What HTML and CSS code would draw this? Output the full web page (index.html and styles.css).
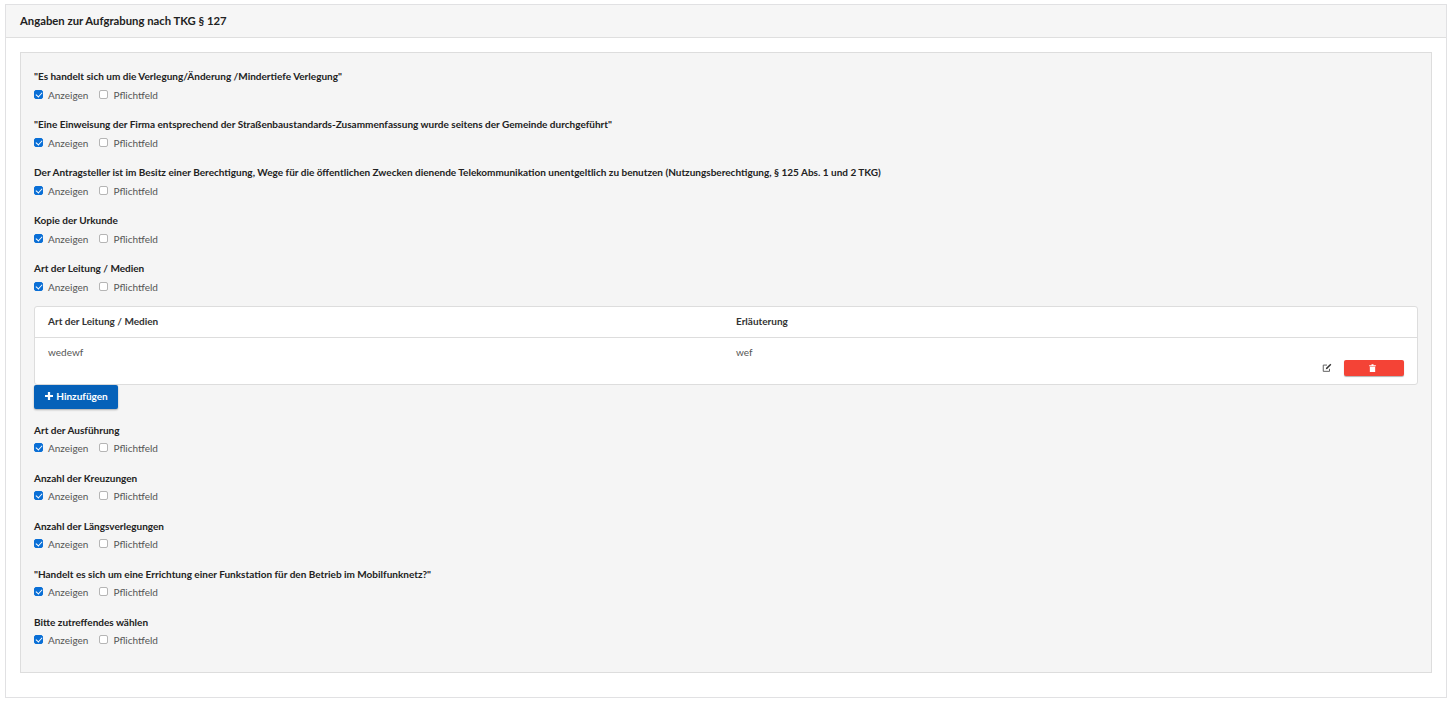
FILE: index.html
```html
<!DOCTYPE html>
<html lang="de">
<head>
<meta charset="utf-8">
<title>Angaben zur Aufgrabung</title>
<link rel="stylesheet" href="styles.css">
</head>
<body>
<section class="card">
  <header class="card-head">Angaben zur Aufgrabung nach TKG § 127</header>
  <div class="card-body">
    <div class="well">
      <div class="field"><div class="field-label">"Es handelt sich um die Verlegung/Änderung /Mindertiefe Verlegung"</div><div class="checks"><label class="check"><input type="checkbox" checked>Anzeigen</label><label class="check"><input type="checkbox">Pflichtfeld</label></div></div>
      <div class="field"><div class="field-label">"Eine Einweisung der Firma entsprechend der Straßenbaustandards-Zusammenfassung wurde seitens der Gemeinde durchgeführt"</div><div class="checks"><label class="check"><input type="checkbox" checked>Anzeigen</label><label class="check"><input type="checkbox">Pflichtfeld</label></div></div>
      <div class="field"><div class="field-label">Der Antragsteller ist im Besitz einer Berechtigung, Wege für die öffentlichen Zwecken dienende Telekommunikation unentgeltlich zu benutzen (Nutzungsberechtigung, § 125 Abs. 1 und 2 TKG)</div><div class="checks"><label class="check"><input type="checkbox" checked>Anzeigen</label><label class="check"><input type="checkbox">Pflichtfeld</label></div></div>
      <div class="field"><div class="field-label">Kopie der Urkunde</div><div class="checks"><label class="check"><input type="checkbox" checked>Anzeigen</label><label class="check"><input type="checkbox">Pflichtfeld</label></div></div>
      <div class="field"><div class="field-label">Art der Leitung / Medien</div><div class="checks"><label class="check"><input type="checkbox" checked>Anzeigen</label><label class="check"><input type="checkbox">Pflichtfeld</label></div></div>
      <div class="table-box">
        <div class="row row-head"><div class="col">Art der Leitung / Medien</div><div class="col">Erläuterung</div></div>
        <div class="row row-data">
          <div class="col">wedewf</div><div class="col">wef</div>
          <div class="actions">
            <svg class="edit-icon" viewBox="0 0 12 12" width="10" height="10" aria-hidden="true"><path d="M9 7v3H1.5V2.5H6" fill="none" stroke="#555" stroke-width="1.1"/><path d="M4.5 7.6 5 5.8 10 1l1.2 1.2-5 4.9z" fill="#333"/></svg>
            <button class="btn-delete" type="button" aria-label="Löschen"><svg viewBox="0 0 10 12" width="7" height="8" aria-hidden="true"><path d="M0 2h10v1.2H0zM3.5 .3h3V2h-3zM1 4h8v8H1z" fill="#fff"/></svg></button>
          </div>
        </div>
      </div>
      <button class="btn-add" type="button"><svg viewBox="0 0 10 10" width="8" height="8" aria-hidden="true"><path d="M3.6 0h2.8v3.6H10v2.8H6.4V10H3.6V6.4H0V3.6h3.6z" fill="#fff"/></svg>Hinzufügen</button>
      <div class="field-group">
      <div class="field"><div class="field-label">Art der Ausführung</div><div class="checks"><label class="check"><input type="checkbox" checked>Anzeigen</label><label class="check"><input type="checkbox">Pflichtfeld</label></div></div>
      <div class="field"><div class="field-label">Anzahl der Kreuzungen</div><div class="checks"><label class="check"><input type="checkbox" checked>Anzeigen</label><label class="check"><input type="checkbox">Pflichtfeld</label></div></div>
      <div class="field"><div class="field-label">Anzahl der Längsverlegungen</div><div class="checks"><label class="check"><input type="checkbox" checked>Anzeigen</label><label class="check"><input type="checkbox">Pflichtfeld</label></div></div>
      <div class="field"><div class="field-label">"Handelt es sich um eine Errichtung einer Funkstation für den Betrieb im Mobilfunknetz?"</div><div class="checks"><label class="check"><input type="checkbox" checked>Anzeigen</label><label class="check"><input type="checkbox">Pflichtfeld</label></div></div>
      <div class="field"><div class="field-label">Bitte zutreffendes wählen</div><div class="checks"><label class="check"><input type="checkbox" checked>Anzeigen</label><label class="check"><input type="checkbox">Pflichtfeld</label></div></div>
      </div>
    </div>
  </div>
</section>
</body>
</html>
```
FILE: styles.css
```css
* { box-sizing: border-box; }
html, body { margin: 0; background: #fff; }
body { padding: 4px 6px 0 5px; font-family: Lato, "Noto Sans", sans-serif; font-size: 10px; color: #333; }
.card { border: 1px solid #e1e1e3; height: 694px; }
.card-head { height: 33px; padding: 0 14px 2px; background: #f6f6f6; border-bottom: 1px solid #dfdfdf; display: flex; align-items: center; font-size: 11.3px; font-weight: 700; color: #222; }
.card-body { padding: 14px 14px 0; }
.well { background: #f5f5f5; border: 1px solid #ddd; height: 621px; padding: 13px 13px 0; }
.field { height: 48px; padding-top: 3px; }
.field-label { height: 15px; line-height: 15px; font-weight: 700; color: #222; white-space: nowrap; }
.checks { display: flex; gap: 11px; height: 18px; margin-top: 2px; align-items: center; }
.field-group .checks { margin-top: 1px; }
.check { display: flex; align-items: center; gap: 5px; color: #555; }
.check input { appearance: none; position: relative; margin: 0 0 1px; width: 9px; height: 9px; background: #fff; border: 1px solid #b5b5b5; border-radius: 2px; }
.check input:checked { background: #0a6fd6; border-color: #0a6fd6; }
.check input:checked::after { content: ""; position: absolute; left: 2px; top: 0; width: 3px; height: 5px; border: solid #fff; border-width: 0 1.5px 1.5px 0; transform: rotate(42deg); }
.table-box { background: #fff; border: 1px solid #ddd; border-radius: 3px; height: 79px; }
.row { display: flex; padding: 0 13px; }
.col { flex: none; width: 688px; }
.row-head { height: 31px; padding-bottom: 2px; align-items: center; border-bottom: 1px solid #ddd; font-weight: 700; color: #333; }
.row-data { position: relative; height: 47px; padding-top: 8px; color: #555; }
.actions { position: absolute; right: 13px; bottom: 9px; display: flex; align-items: center; gap: 12px; }
.edit-icon { display: block; }
.btn-delete { width: 60px; height: 16px; background: #f44336; border: 0; border-radius: 2px; padding: 0 4px 0 0; box-shadow: 0 1px 1px rgba(0,0,0,.3); display: flex; align-items: center; justify-content: center; }
.btn-add { width: 84px; height: 24px; margin-bottom: 11px; background: #0561b9; color: #fff; border: 0; border-radius: 2px; box-shadow: 0 1px 2px rgba(0,0,0,.3); font: 700 10px Lato, sans-serif; display: flex; align-items: center; justify-content: center; gap: 3px; padding: 0 0 2px 1px; }
```
